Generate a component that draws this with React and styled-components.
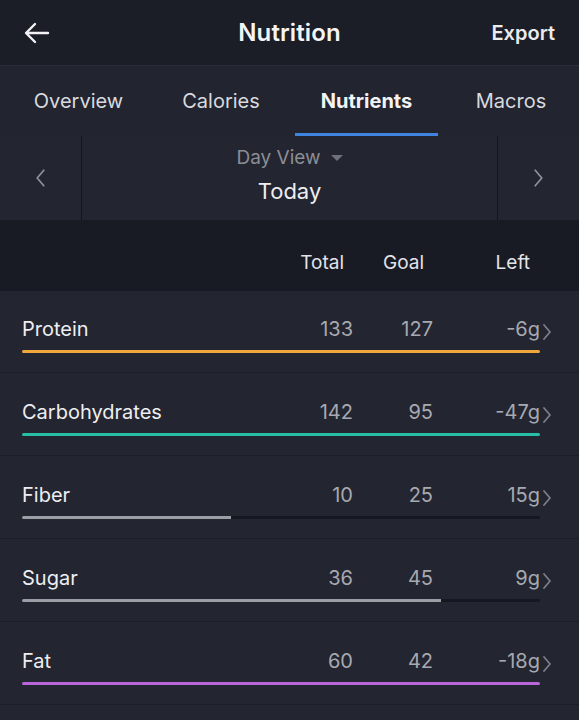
import React from 'react';
import styled, { createGlobalStyle } from 'styled-components';

const GlobalStyle = createGlobalStyle`
  body {
    margin: 0;
    background: #232530;
    font-family: Inter, "Open Sans", "Liberation Sans", sans-serif;
    -webkit-font-smoothing: antialiased;
  }
`;

const Page = styled.div`
  width: 579px;
  min-height: 720px;
  background: #232530;
  color: #ecedf0;
`;

const Header = styled.header`
  height: 65px;
  display: grid;
  grid-template-columns: 1fr auto 1fr;
  align-items: center;
  padding: 0 24px;
  background: #1b1d27;
  border-bottom: 1px solid #2c2e39;
`;

const BackButton = styled.div`
  display: flex;
  align-items: center;
  color: #f2f2f4;
`;

const Title = styled.h1`
  margin: 0;
  font-size: 24px;
  font-weight: 600;
  color: #f4f4f6;
  letter-spacing: 0.1px;
`;

const ExportLink = styled.div`
  justify-self: end;
  font-size: 20px;
  font-weight: 600;
  color: #ebebee;
`;

const Tabs = styled.nav`
  height: 70px;
  display: grid;
  grid-template-columns: 157px 128px 158px 1fr;
  align-items: stretch;
  background: #22242f;
`;

const Tab = styled.div`
  display: flex;
  align-items: center;
  justify-content: center;
  font-size: 20px;
  font-weight: ${(p) => (p.$active ? 700 : 400)};
  color: ${(p) => (p.$active ? '#f3f3f5' : '#d9dadf')};
  border-bottom: 3px solid ${(p) => (p.$active ? '#3f84e0' : 'transparent')};
  margin: ${(p) => (p.$active ? '0 5px 0 10px' : '0')};
  padding-top: 3px;
`;

const DayBar = styled.div`
  height: 84px;
  display: grid;
  grid-template-columns: 82px 1fr 82px;
  background: #232530;
`;

const DayArrow = styled.div`
  display: flex;
  align-items: center;
  justify-content: center;
  color: #8f919a;
  border-${(p) => p.$side}: 1px solid #14161e;
`;

const DayCenter = styled.div`
  display: flex;
  flex-direction: column;
  align-items: center;
  justify-content: center;
  gap: 9px;
  padding-bottom: 6px;
`;

const DayMode = styled.div`
  display: flex;
  align-items: center;
  gap: 10px;
  font-size: 19px;
  color: #8c8e96;
`;

const Caret = styled.span`
  width: 0;
  height: 0;
  border-left: 6px solid transparent;
  border-right: 6px solid transparent;
  border-top: 6px solid #6f717a;
`;

const DayLabel = styled.div`
  font-size: 22px;
  color: #eeeef1;
`;

const ColumnHeader = styled.div`
  height: 71px;
  display: grid;
  grid-template-columns: 1fr 80px 80px 107px;
  align-items: center;
  padding: 14px 40px 0 0;
  box-sizing: border-box;
  background: #181a24;
  font-size: 19px;
  color: #e3e3e7;
`;

const HeadCell = styled.div`
  text-align: right;
  padding-right: ${(p) => p.$pad || 0}px;
`;

const Row = styled.div`
  height: 82px;
  padding: 24px 0 0 22px;
  box-sizing: border-box;
  border-bottom: 1px solid #1c1e27;
  margin-bottom: 1px;
`;

const RowTop = styled.div`
  display: grid;
  grid-template-columns: 1fr 80px 80px 107px 39px;
  align-items: center;
  height: 26px;
`;

const Name = styled.div`
  font-size: 20px;
  color: #eeeef1;
`;

const Num = styled.div`
  text-align: right;
  font-size: 20px;
  color: #a7a9b0;
`;

const Chevron = styled.div`
  display: flex;
  align-items: center;
  padding-left: 2px;
  padding-top: 7px;
  color: #7d7f88;
`;

const Track = styled.div`
  margin-top: 9px;
  width: 518px;
  height: 3px;
  background: #161821;
  border-radius: 2px;
  overflow: hidden;
`;

const Fill = styled.div`
  height: 100%;
  background: ${(p) => p.$color};
`;

const nutrients = [
  { name: 'Protein', total: 133, goal: 127, left: '-6g', color: '#f0a83c' },
  { name: 'Carbohydrates', total: 142, goal: 95, left: '-47g', color: '#27bfa5' },
  { name: 'Fiber', total: 10, goal: 25, left: '15g', color: '#9c9ea5' },
  { name: 'Sugar', total: 36, goal: 45, left: '9g', color: '#9c9ea5' },
  { name: 'Fat', total: 60, goal: 42, left: '-18g', color: '#b866d8' },
];

const ArrowLeft = () => (
  <svg width="26" height="24" viewBox="0 0 26 24" fill="none" stroke="currentColor" strokeWidth="2.4" strokeLinecap="round" strokeLinejoin="round">
    <path d="M24 12H3M11 3l-9 9 9 9" />
  </svg>
);

const ChevronIcon = ({ dir = 'right', size = 20, stroke = 1.8 }) => (
  <svg width={size / 2} height={size} viewBox="0 0 10 20" fill="none" stroke="currentColor" strokeWidth={stroke} strokeLinecap="round" strokeLinejoin="round">
    {dir === 'right' ? <path d="M2 3l6 7-6 7" /> : <path d="M8 3l-6 7 6 7" />}
  </svg>
);

export default function App() {
  return (
    <Page>
      <GlobalStyle />
      <Header>
        <BackButton>
          <ArrowLeft />
        </BackButton>
        <Title>Nutrition</Title>
        <ExportLink>Export</ExportLink>
      </Header>
      <Tabs>
        <Tab>Overview</Tab>
        <Tab>Calories</Tab>
        <Tab $active>Nutrients</Tab>
        <Tab>Macros</Tab>
      </Tabs>
      <DayBar>
        <DayArrow $side="right">
          <ChevronIcon dir="left" size={22} stroke={1.6} />
        </DayArrow>
        <DayCenter>
          <DayMode>
            Day View <Caret />
          </DayMode>
          <DayLabel>Today</DayLabel>
        </DayCenter>
        <DayArrow $side="left">
          <ChevronIcon dir="right" size={22} stroke={1.6} />
        </DayArrow>
      </DayBar>
      <ColumnHeader>
        <div />
        <HeadCell $pad={8}>Total</HeadCell>
        <HeadCell $pad={8}>Goal</HeadCell>
        <HeadCell $pad={9}>Left</HeadCell>
      </ColumnHeader>
      {nutrients.map((n) => {
        const pct = Math.min(100, (n.total / n.goal) * 101);
        return (
          <Row key={n.name}>
            <RowTop>
              <Name>{n.name}</Name>
              <Num>{n.total}</Num>
              <Num>{n.goal}</Num>
              <Num>{n.left}</Num>
              <Chevron>
                <ChevronIcon />
              </Chevron>
            </RowTop>
            <Track>
              <Fill $color={n.color} style={{ width: `${pct}%` }} />
            </Track>
          </Row>
        );
      })}
    </Page>
  );
}
